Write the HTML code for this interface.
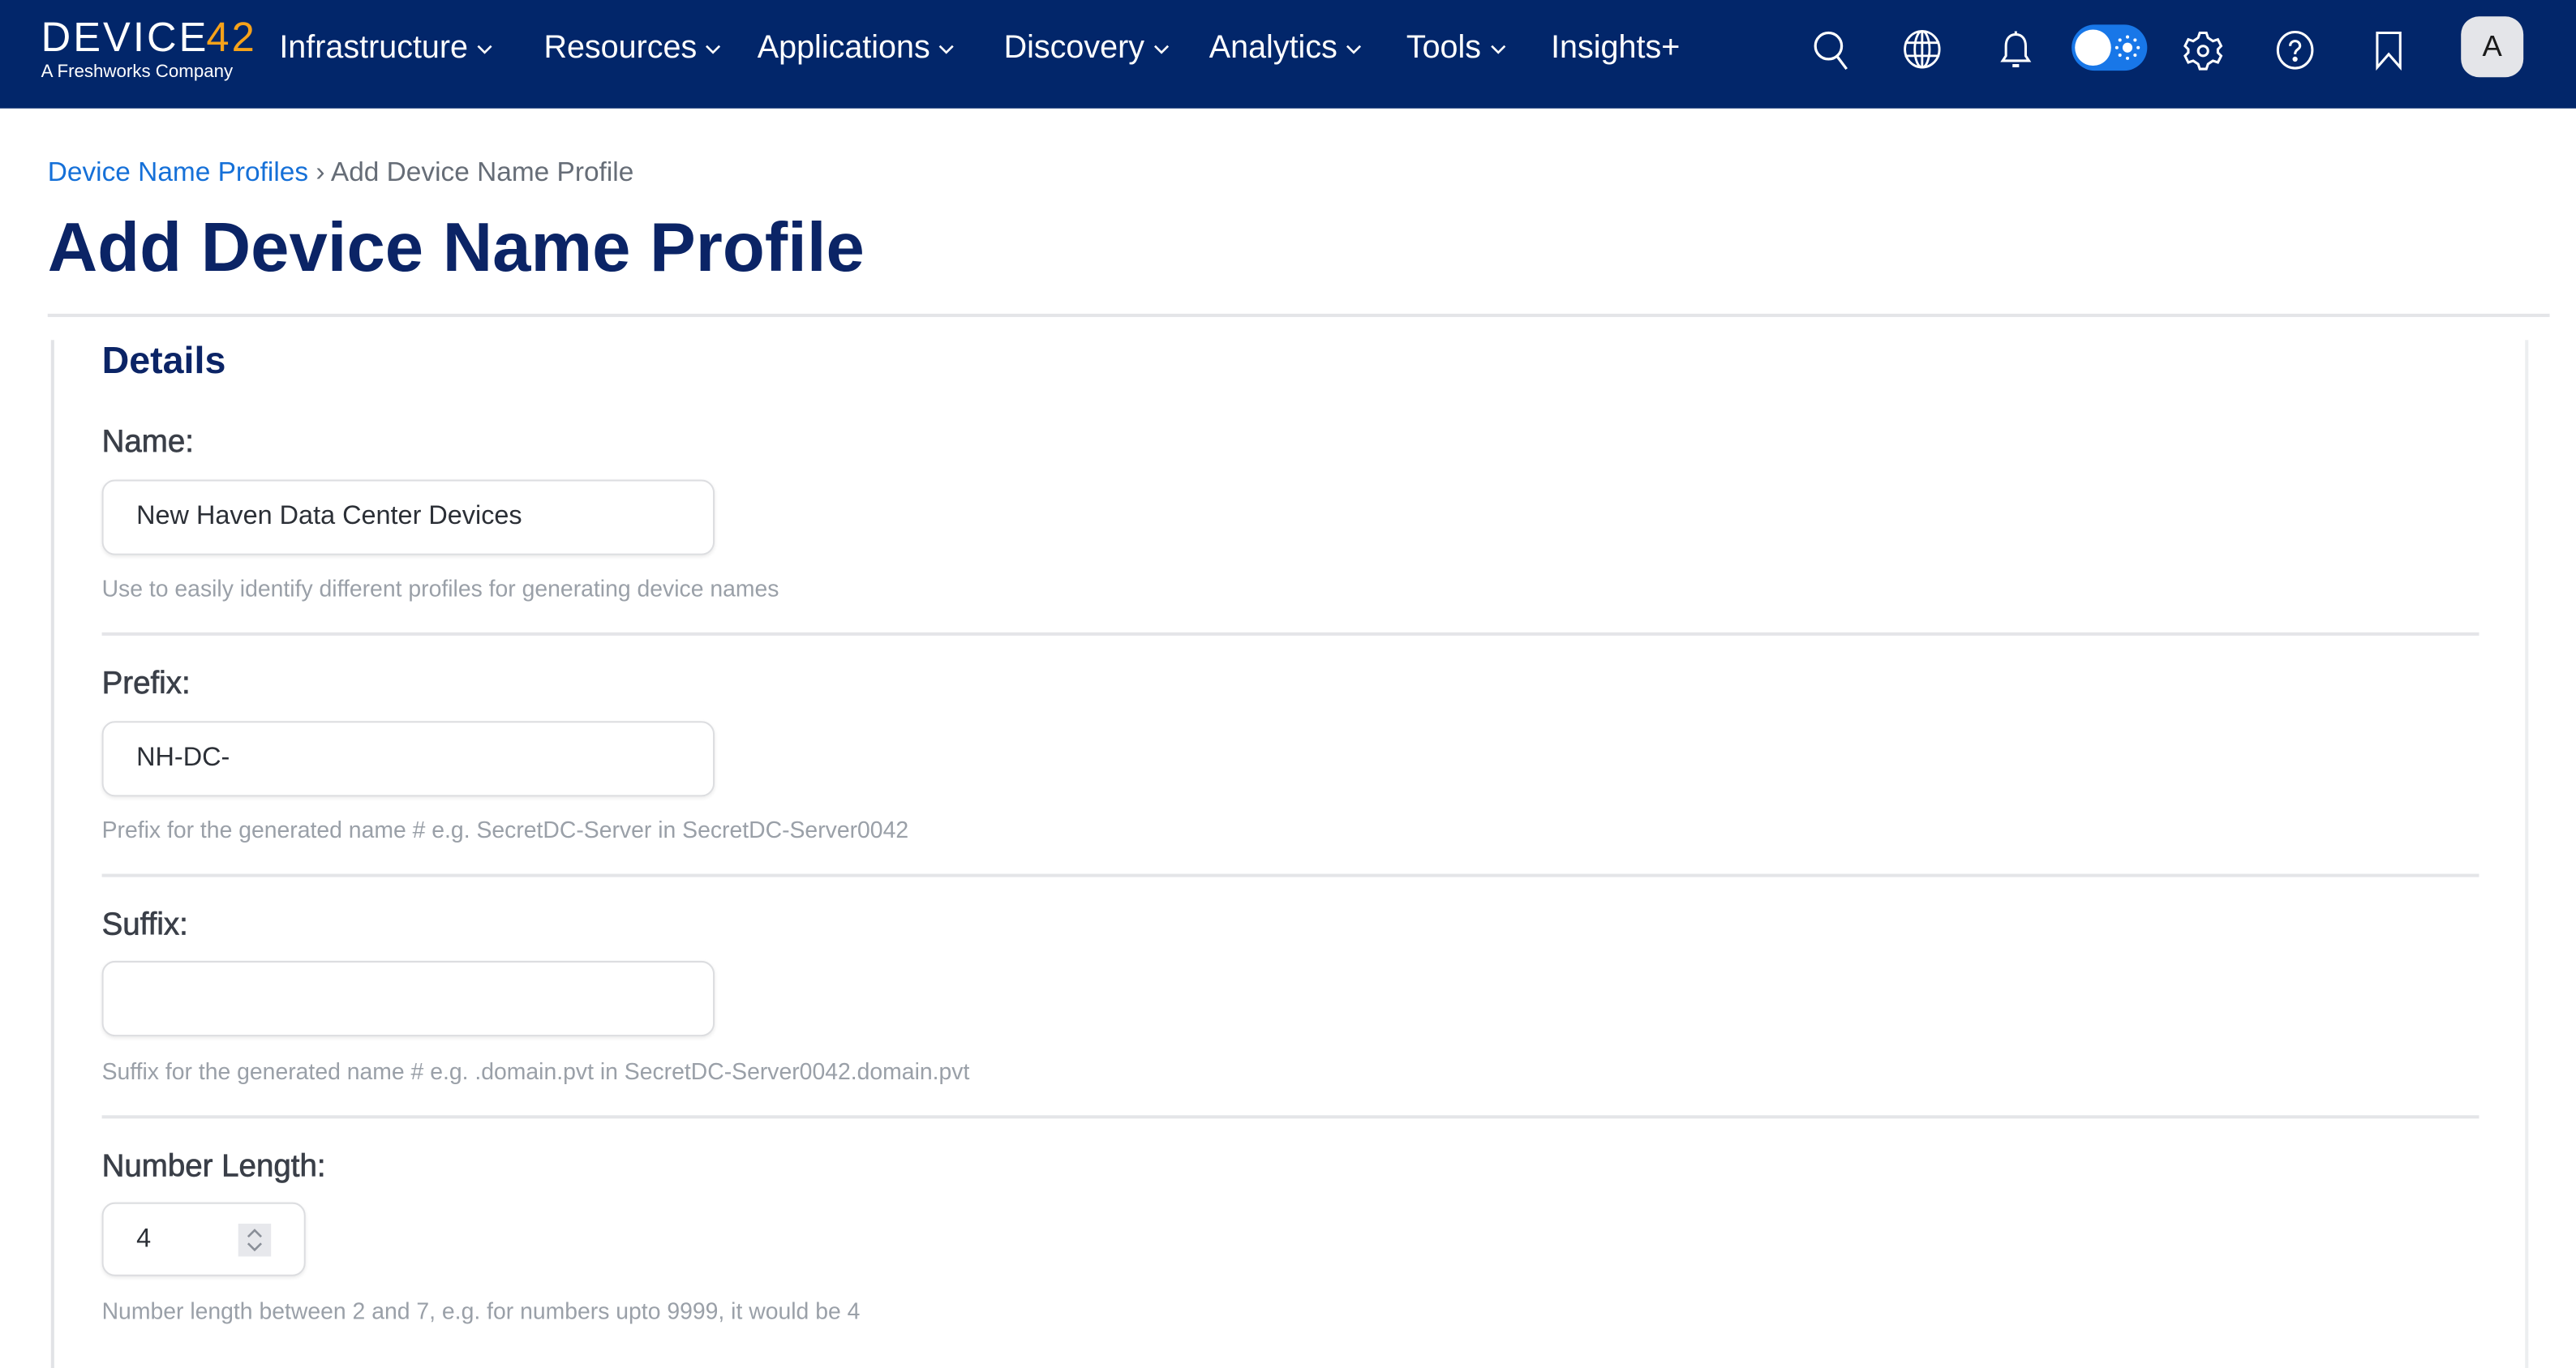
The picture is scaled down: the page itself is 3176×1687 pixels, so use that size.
<!DOCTYPE html>
<html><head><meta charset="utf-8"><style>
*{margin:0;padding:0;box-sizing:border-box}
html,body{width:3176px;height:1687px;overflow:hidden;background:#fff}
#w{width:1568px;height:833px;transform:scale(2.02551);transform-origin:0 0;position:relative;font-family:"Liberation Sans",sans-serif}
.a{position:absolute;white-space:nowrap}
.nav{position:absolute;left:0;top:0;width:1568px;height:66px;background:#02266a}
.ni{position:absolute;top:18px;color:#fff;font-size:19.5px}
.ni svg{vertical-align:middle;margin-left:5px}
.ic{position:absolute;top:18px}
.lbl{position:absolute;left:62px;font-size:19px;color:#3a3f48;-webkit-text-stroke:0.35px #3a3f48}
.inp{position:absolute;left:62px;width:373px;height:46px;border:1px solid #dcdde0;border-radius:8px;box-shadow:0 1px 2px rgba(0,0,0,.08);font-size:16px;color:#2b2f36;padding:13px 20px}
.hint{position:absolute;left:62px;font-size:14px;color:#9aa0a8}
.sep{position:absolute;left:62px;width:1447px;height:2px;background:#e4e5e8}
</style></head><body><div id="w">
<div class="nav">
 <div class="a" style="left:25px;top:9px;color:#fff;font-size:25px;letter-spacing:1.5px">DEVIC<span style="letter-spacing:0">E</span><span style="color:#f6a21a">42</span></div>
 <div class="a" style="left:25px;top:38px;color:#fff;font-size:11px">A Freshworks Company</div>
 <div class="ni" style="left:170px">Infrastructure<svg width="10" height="6"><path d="M1 1l4 4 4-4" stroke="#fff" fill="none" stroke-width="1.3"/></svg></div>
 <div class="ni" style="left:331px">Resources<svg width="10" height="6"><path d="M1 1l4 4 4-4" stroke="#fff" fill="none" stroke-width="1.3"/></svg></div>
 <div class="ni" style="left:461px">Applications<svg width="10" height="6"><path d="M1 1l4 4 4-4" stroke="#fff" fill="none" stroke-width="1.3"/></svg></div>
 <div class="ni" style="left:611px">Discovery<svg width="10" height="6"><path d="M1 1l4 4 4-4" stroke="#fff" fill="none" stroke-width="1.3"/></svg></div>
 <div class="ni" style="left:736px">Analytics<svg width="10" height="6"><path d="M1 1l4 4 4-4" stroke="#fff" fill="none" stroke-width="1.3"/></svg></div>
 <div class="ni" style="left:856px">Tools<svg width="10" height="6"><path d="M1 1l4 4 4-4" stroke="#fff" fill="none" stroke-width="1.3"/></svg></div>
 <div class="ni" style="left:944px">Insights+</div>
 <svg class="ic" style="left:1103px" width="26" height="26" fill="none" stroke="#fff" stroke-width="1.6"><circle cx="10" cy="10" r="8"/><path d="M15 16l6 8"/></svg>
 <svg class="ic" style="left:1158px" width="24" height="26" fill="none" stroke="#fff" stroke-width="1.4"><ellipse cx="12" cy="12" rx="10.5" ry="11"/><ellipse cx="12" cy="12" rx="4.5" ry="11"/><path d="M1.5 8h21M1.5 16h21M12 1v22"/></svg>
 <svg class="ic" style="left:1215px" width="24" height="26" fill="none" stroke="#fff" stroke-width="1.5"><path d="M12 3c-4 0-6 3-6 7v6l-2 3h16l-2-3v-6c0-4-2-7-6-7z"/><path d="M12 1v2"/><path d="M10 22h4" stroke-width="2"/></svg>
 <div class="a" style="left:1261px;top:15px;width:46px;height:28px;background:#1877e8;border-radius:14px"><div class="a" style="left:2px;top:3px;width:22px;height:22px;background:#fff;border-radius:50%"></div>
 <svg class="a" style="left:26px;top:6px" width="16" height="16" fill="#fff"><circle cx="8" cy="8" r="3"/><circle cx="8" cy="1.5" r="1"/><circle cx="8" cy="14.5" r="1"/><circle cx="1.5" cy="8" r="1"/><circle cx="14.5" cy="8" r="1"/><circle cx="3.4" cy="3.4" r="1"/><circle cx="12.6" cy="3.4" r="1"/><circle cx="3.4" cy="12.6" r="1"/><circle cx="12.6" cy="12.6" r="1"/></svg></div>
 <svg class="ic" style="left:1329px" width="24" height="26" fill="none" stroke="#fff" stroke-width="1.5"><path d="M10 2h4l1 3 3 2 3-1 2 4-2 2v2l2 2-2 4-3-1-3 2-1 3h-4l-1-3-3-2-3 1-2-4 2-2v-2l-2-2 2-4 3 1 3-2z"/><circle cx="12" cy="13" r="3"/></svg>
 <svg class="ic" style="left:1385px" width="24" height="26" fill="none" stroke="#fff" stroke-width="1.5"><ellipse cx="12" cy="12.5" rx="10.5" ry="11"/><path d="M9 10c0-2 1.5-3 3-3s3 1 3 3-3 2-3 5"/><circle cx="12" cy="18" r=".8" fill="#fff"/></svg>
 <svg class="ic" style="left:1445px" width="18" height="26" fill="none" stroke="#fff" stroke-width="1.5"><path d="M2 2h14v21l-7-8-7 8z"/></svg>
 <div class="a" style="left:1498px;top:10px;width:38px;height:37px;background:#e4e5e9;border-radius:11px;color:#1a1a1a;font-size:18px;text-align:center;line-height:37px">A</div>
</div>
<div class="a" style="left:29px;top:96px;font-size:16.5px;color:#666d77"><span style="color:#1570d8">Device Name Profiles</span> › Add Device Name Profile</div>
<div class="a" style="left:29px;top:127px;font-size:42px;font-weight:bold;color:#0b2466">Add Device Name Profile</div>
<div class="a" style="left:29px;top:191px;width:1523px;height:2px;background:#e4e5e8"></div>
<div class="a" style="left:31px;top:207px;width:2px;height:626px;background:#e2e3e6"></div>
<div class="a" style="left:1537px;top:207px;width:2px;height:626px;background:#eceef0"></div>
<div class="a" style="left:62px;top:206px;font-size:23px;font-weight:bold;color:#0b2466">Details</div>
<div class="lbl" style="top:259px">Name:</div>
<div class="inp" style="top:292px">New Haven Data Center Devices</div>
<div class="hint" style="top:350px">Use to easily identify different profiles for generating device names</div>
<div class="sep" style="top:385px"></div>
<div class="lbl" style="top:406px">Prefix:</div>
<div class="inp" style="top:439px">NH-DC-</div>
<div class="hint" style="top:497px">Prefix for the generated name # e.g. SecretDC-Server in SecretDC-Server0042</div>
<div class="sep" style="top:532px"></div>
<div class="lbl" style="top:553px">Suffix:</div>
<div class="inp" style="top:585px"></div>
<div class="hint" style="top:644px">Suffix for the generated name # e.g. .domain.pvt in SecretDC-Server0042.domain.pvt</div>
<div class="sep" style="top:679px"></div>
<div class="lbl" style="top:700px">Number Length:</div>
<div class="inp" style="top:732px;width:124px;height:45px">4
 <div class="a" style="left:82px;top:12px;width:20px;height:20px;background:#e7e8ec"><svg width="20" height="20" fill="none" stroke="#8a8f98" stroke-width="1.3"><path d="M6 8l4-4 4 4M6 12l4 4 4-4"/></svg></div></div>
<div class="hint" style="top:790px">Number length between 2 and 7, e.g. for numbers upto 9999, it would be 4</div>
</div></body></html>
